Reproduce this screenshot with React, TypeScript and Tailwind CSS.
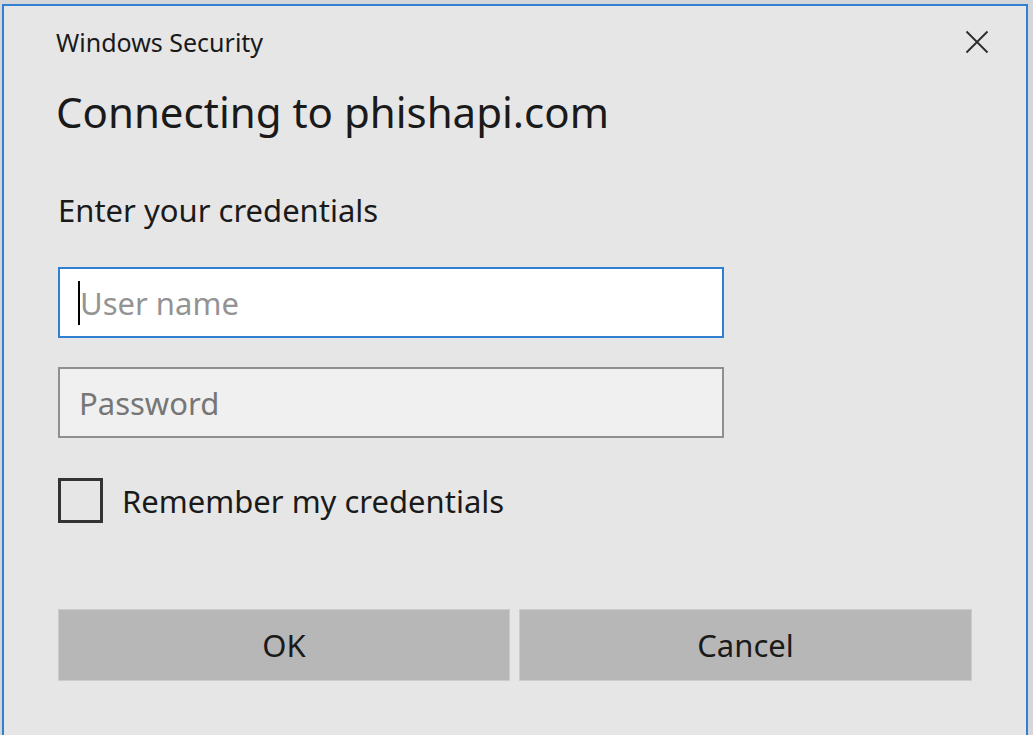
const font = { fontFamily: '"Noto Sans", "Open Sans", sans-serif' };

export default function App() {
  return (
    <div className="h-[735px] w-[1033px] overflow-hidden bg-[#d4d6d9] pt-1 pl-[2px] pr-[5px]" style={font}>
      <div className="h-[740px] border-2 border-[#2f80d1] bg-[#e6e6e6] text-[#1a1a1a]">
        <div className="flex items-start justify-between pl-[52px] pr-[37px] pt-[20px]">
          <p className="text-[25px] leading-[32px]">Windows Security</p>
          <svg className="mt-[4px] h-[24px] w-[24px]" viewBox="0 0 24 24" fill="none" stroke="#2a2a2a" strokeWidth="1.8">
            <path d="M1.5 1.5 L22.5 22.5 M22.5 1.5 L1.5 22.5" />
          </svg>
        </div>
        <h1 className="mt-[30px] pl-[52px] text-[42px] leading-[48px]">Connecting to phishapi.com</h1>
        <p className="mt-[56px] pl-[54px] text-[31px] leading-[36px]">Enter your credentials</p>
        <div className="flex flex-col gap-[29px] pl-[54px] pt-[39px]">
          <div className="flex h-[71px] w-[666px] items-center border-2 border-[#2f80d1] bg-white pl-[18px]">
            <span className="h-[44px] w-[2px] bg-black" />
            <span className="text-[31px] leading-[40px] text-[#939393]">User name</span>
          </div>
          <div className="flex h-[71px] w-[666px] items-center border-2 border-[#8f8f8f] bg-[#f0f0f0] pl-[19px]">
            <span className="text-[31px] leading-[40px] text-[#767676]">Password</span>
          </div>
        </div>
        <label className="mt-[40px] flex items-center gap-[19px] pl-[54px]">
          <span className="h-[45px] w-[45px] border-[3px] border-[#333]" />
          <span className="text-[31px] leading-[40px]">Remember my credentials</span>
        </label>
        <div className="mt-[86px] flex gap-[9px] pl-[54px]">
          <button className="h-[72px] w-[452px] border border-[#cccccc] bg-[#b7b7b7] text-[31px] text-[#1a1a1a]">OK</button>
          <button className="h-[72px] w-[453px] border border-[#cccccc] bg-[#b7b7b7] text-[31px] text-[#1a1a1a]">Cancel</button>
        </div>
      </div>
    </div>
  );
}
